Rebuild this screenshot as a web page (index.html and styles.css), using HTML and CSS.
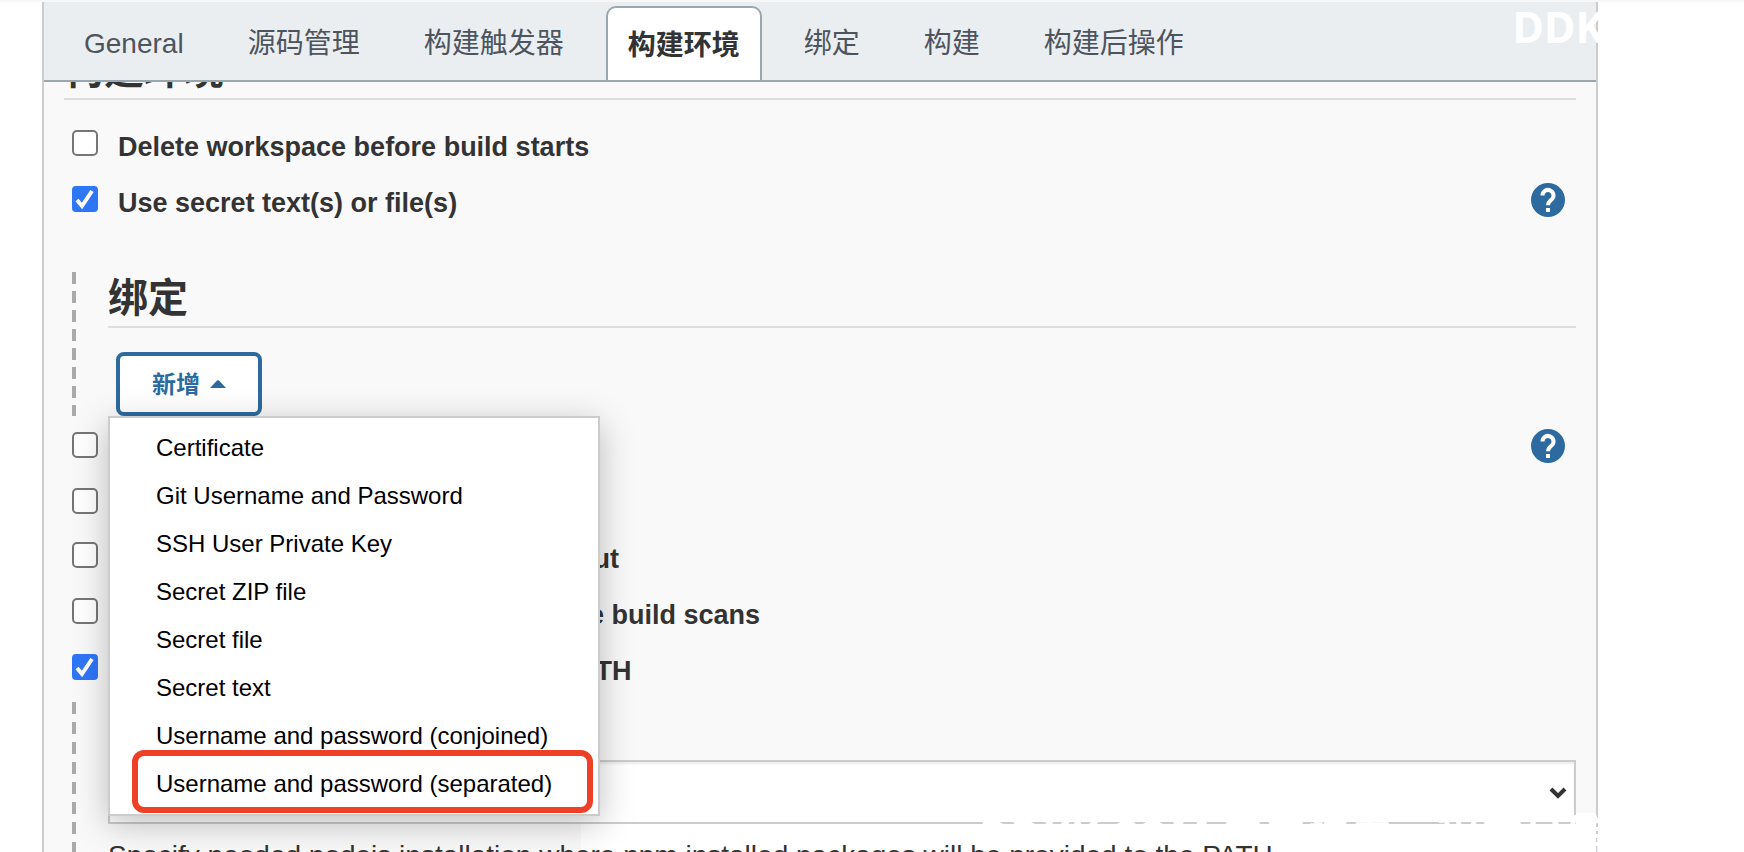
FILE: index.html
```html
<!DOCTYPE html>
<html lang="zh-CN">
<head>
  <meta charset="UTF-8">
  <meta name="viewport" content="width=device-width, initial-scale=1.0">
  <title>构建环境</title>
  <link rel="stylesheet" href="styles.css">
</head>
<body>
  <div class="config">
    <nav class="tabs">
      <a href="#general" class="tab">General</a>
      <a href="#scm" class="tab">源码管理</a>
      <a href="#triggers" class="tab">构建触发器</a>
      <a href="#env" class="tab active">构建环境</a>
      <a href="#bindings" class="tab">绑定</a>
      <a href="#build" class="tab">构建</a>
      <a href="#post" class="tab">构建后操作</a>
      <span class="brand">DDK</span>
    </nav>

    <main class="content">
      <div class="section-clip"><h2 class="section-title">构建环境</h2></div>

      <div class="options">
        <div class="row">
          <input type="checkbox" id="clean">
          <label for="clean">Delete workspace before build starts</label>
        </div>
        <div class="row">
          <input type="checkbox" id="secret" checked>
          <label for="secret">Use secret text(s) or file(s)</label>
          <button class="help" aria-label="Help">
            <svg viewBox="0 0 34 34"><circle cx="17" cy="17" r="17"/><path d="M11.500 12.500a5.500 5.500 0 1 1 9.500 3.700c-2 2-4 3-4 6"/><path d="M15 25h4v4h-4z" class="dot"/></svg>
          </button>
        </div>
      </div>

      <section class="nested bindings">
        <h3 class="nested-title">绑定</h3>
        <div class="add">
          <button class="add-button">新增
            <svg viewBox="0 0 16 8"><path d="M0 8 7 0.500Q8 0 9 0.500L16 8z"/></svg>
          </button>
          <ul class="menu">
            <li><a href="#">Certificate</a></li>
            <li><a href="#">Git Username and Password</a></li>
            <li><a href="#">SSH User Private Key</a></li>
            <li><a href="#">Secret ZIP file</a></li>
            <li><a href="#">Secret file</a></li>
            <li><a href="#">Secret text</a></li>
            <li><a href="#">Username and password (conjoined)</a></li>
            <li class="marked"><a href="#">Username and password (separated)</a></li>
          </ul>
        </div>
      </section>

      <div class="options more">
        <div class="row">
          <input type="checkbox" id="abort">
          <label for="abort">Abort the build if it's stuck</label>
          <button class="help" aria-label="Help">
            <svg viewBox="0 0 34 34"><circle cx="17" cy="17" r="17"/><path d="M11.500 12.500a5.500 5.500 0 1 1 9.500 3.700c-2 2-4 3-4 6"/><path d="M15 25h4v4h-4z" class="dot"/></svg>
          </button>
        </div>
        <div class="row short">
          <input type="checkbox" id="ant">
          <label for="ant">With Ant</label>
        </div>
        <div class="row">
          <input type="checkbox" id="stamps">
          <label for="stamps">Add timestamps to the Console Output</label>
        </div>
        <div class="row">
          <input type="checkbox" id="scans">
          <label for="scans">Inspect build log for published Gradle build scans</label>
        </div>
        <div class="row">
          <input type="checkbox" id="node" checked>
          <label for="node">Provide Node &amp; npm bin/ folder to PATH</label>
        </div>
      </div>

      <section class="nested node">
        <div class="picker">
          <select aria-label="NodeJS Installation"><option></option></select>
          <svg viewBox="0 0 18 12"><path d="M2 2l7 7 7-7"/></svg>
        </div>
        <p class="hint">Specify needed nodejs installation where npm installed packages will be provided to the PATH</p>
      </section>
    </main>
    <div class="footer-mark">DDKK.COM 弟弟快看，程序员编程</div>
  </div>
</body>
</html>
```
FILE: styles.css
```css
* {
  box-sizing: border-box;
}
body {
  margin: 0;
  height: 100vh;
  overflow: hidden;
  background: #fff;
  border-top: 2px solid #f8f8f8;
  font-family: "Liberation Sans", "Noto Sans CJK SC", sans-serif;
  color: #333;
}
.config {
  position: relative;
  margin: 0 146px 0 42px;
  height: 100%;
  background: #f9f9f9;
  border: 2px solid #ccc;
  border-width: 0 2px;
}
/* white band behind the footer mark */
.config::before {
  content: "";
  position: absolute;
  inset: auto 0 0 537px;
  height: 39px;
  background: #fff;
}

/* tabs */
.tabs {
  position: relative;
  display: flex;
  align-items: flex-end;
  gap: 20px;
  height: 80px;
  padding-left: 18px;
  background: #eaeef1;
  border-bottom: 2px solid #9aa7ae;
}
.tab {
  height: 74px;
  padding: 0 20px;
  border: 2px solid transparent;
  border-bottom: 0;
  font-size: 28px;
  line-height: 72px;
  color: #4d545d;
  text-decoration: none;
  white-space: nowrap;
}
.tab.active {
  background: #fff;
  border-color: #9aa7ae;
  border-radius: 10px 10px 0 0;
  font-weight: bold;
  line-height: 76px;
  color: #333;
}
.brand {
  position: absolute;
  top: 0;
  right: -8px;
  font: bold 43px/50px "Noto Sans", sans-serif;
  color: #fff;
}

/* content */
.content {
  position: relative;
  padding: 0 20px;
}
.section-clip {
  display: flex;
  align-items: flex-end;
  height: 18px;
  overflow: hidden;
  border-bottom: 2px solid #ddd;
}
.section-title,
.nested-title {
  margin: 0;
  font-size: 40px;
  line-height: 56px;
}
.options {
  padding: 22px 11px 0 8px;
}
.row {
  display: flex;
  align-items: flex-start;
  height: 56px;
  padding-top: 8px;
}
.row.short {
  height: 54px;
}
.row input {
  appearance: none;
  flex: none;
  width: 26px;
  height: 26px;
  margin: 0 20px 0 0;
  background: #fff;
  border: 2px solid #767676;
  border-radius: 5px;
}
.row input:checked {
  border: 0;
  border-radius: 4px;
  background: #2f76f6 url("data:image/svg+xml,%3Csvg xmlns='http://www.w3.org/2000/svg' viewBox='0 0 26 26'%3E%3Cpath d='M5 14l5 6L20 5' fill='none' stroke='white' stroke-width='4'/%3E%3C/svg%3E");
}
.row label {
  font-size: 27px;
  font-weight: bold;
  line-height: 34px;
  white-space: nowrap;
}
.help {
  width: 34px;
  height: 34px;
  margin: -3px 0 0 auto;
  padding: 0;
  background: none;
  border: 0;
}
.help svg {
  display: block;
  fill: none;
  stroke: #fff;
  stroke-width: 4;
}
.help circle {
  fill: #2d6a9f;
  stroke: none;
}
.help .dot {
  fill: #fff;
  stroke: none;
}

.nested {
  margin-left: 8px;
  padding-left: 36px;
  background: repeating-linear-gradient(#aaa 0 12px, transparent 12px 19px) 0 0 / 4px 100% no-repeat;
}
.bindings {
  height: 144px;
  margin-top: 38px;
}
.nested-title {
  height: 56px;
  line-height: 52px;
  border-bottom: 2px solid #ddd;
}
.add {
  position: relative;
  padding: 24px 8px 0;
}
.add-button {
  display: flex;
  align-items: center;
  justify-content: center;
  gap: 10px;
  width: 146px;
  height: 64px;
  padding: 0 0 4px;
  background: #fff;
  border: 4px solid #2d6a9f;
  border-radius: 8px;
  font: bold 24px "Liberation Sans", "Noto Sans CJK SC", sans-serif;
  color: #2d6a9f;
}
.add-button svg {
  width: 16px;
  height: 8px;
  margin-top: 4px;
  fill: #2d6a9f;
}
.menu {
  position: absolute;
  top: 88px;
  left: 0;
  z-index: 2;
  width: 492px;
  margin: 0;
  padding: 6px 0;
  list-style: none;
  background: #fff;
  border: 2px solid #ccc;
  box-shadow: 0 8px 32px rgba(0, 0, 0, 0.25);
}
.menu li {
  position: relative;
  padding-left: 46px;
  font-size: 24px;
  line-height: 48px;
}
.menu a {
  color: #000;
  text-decoration: none;
}
/* red frame round the entry to pick */
.marked::after {
  content: "";
  position: absolute;
  inset: -10px 5px -5px 22px;
  border: 6px solid #ee4027;
  border-radius: 12px;
}

.more {
  padding-top: 8px;
}
.node {
  padding-top: 58px;
  background-image: repeating-linear-gradient(#aaa 0 12px, transparent 12px 20px);
}
.picker {
  position: relative;
}
.picker select {
  appearance: none;
  display: block;
  width: 100%;
  height: 64px;
  background: #fff;
  border: 2px solid #ccc;
  border-radius: 0;
  box-shadow: inset 0 2px 2px rgba(0, 0, 0, 0.08);
}
.picker svg {
  position: absolute;
  top: 27px;
  right: 9px;
  width: 18px;
  height: 12px;
  fill: none;
  stroke: #333;
  stroke-width: 4;
}
.hint {
  position: relative;
  z-index: 1;
  margin: 0;
  padding-top: 16px;
  font-size: 28px;
  line-height: 32px;
  white-space: nowrap;
}
.footer-mark {
  position: absolute;
  left: 935px;
  bottom: -14px;
  font: bold 43px/60px "Noto Sans", "Noto Sans CJK SC", sans-serif;
  color: #fff;
  white-space: nowrap;
}
```
